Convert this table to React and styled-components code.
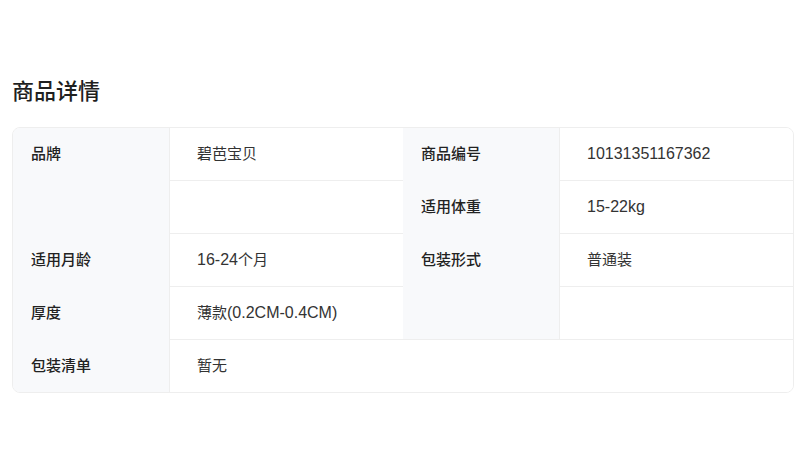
// 商品详情 규격표 - 라벨/값 두 쌍 + 마지막 전체 폭 행
import React from 'react';
import styled, { createGlobalStyle } from 'styled-components';

const GlobalStyle = createGlobalStyle`
  html, body {
    margin: 0;
    padding: 0;
    background: #fff;
  }
  body {
    font-family: 'Noto Sans CJK SC', 'Noto Sans', sans-serif;
    color: #222;
  }
`;

// col: 1 = 왼쪽, 3 = 오른쪽 / row, span: 그리드 위치
const labels = [
  { text: '品牌', col: 1, row: 1, span: 2 },
  { text: '适用月龄', col: 1, row: 3, span: 1 },
  { text: '厚度', col: 1, row: 4, span: 1 },
  { text: '包装清单', col: 1, row: 5, span: 1 },
  { text: '商品编号', col: 3, row: 1, span: 1 },
  { text: '适用体重', col: 3, row: 2, span: 1 },
  { text: '包装形式', col: 3, row: 3, span: 2 },
];

const values = [
  { text: '碧芭宝贝', col: 2, row: 1 },
  { text: '', col: 2, row: 2 },
  { text: '16-24个月', col: 2, row: 3 },
  { text: '薄款(0.2CM-0.4CM)', col: 2, row: 4 },
  { text: '10131351167362', col: 4, row: 1 },
  { text: '15-22kg', col: 4, row: 2 },
  { text: '普通装', col: 4, row: 3 },
  { text: '', col: 4, row: 4 },
  { text: '暂无', col: 2, row: 5, wide: true },
];

// 한자 / 영문·숫자 구간을 나눠서 영문 쪽만 Arial 계열로
const splitRuns = (text) =>
  text
    .split(/([\u4e00-\u9fff]+)/)
    .filter(Boolean)
    .map((part, i) =>
      /[\u4e00-\u9fff]/.test(part) ? <span key={i}>{part}</span> : <Latin key={i}>{part}</Latin>
    );

const App = () => {
  return (
    <>
      <GlobalStyle />
      <Page>
        <Title>商品详情</Title>
        <Card>
          {labels.map((l) => (
            <Label key={l.text} $col={l.col} $row={l.row} $span={l.span}>
              {l.text}
            </Label>
          ))}
          {values.map((v) => (
            <Value key={`${v.col}-${v.row}`} $col={v.col} $row={v.row} $wide={v.wide}>
              {splitRuns(v.text)}
            </Value>
          ))}
        </Card>
      </Page>
    </>
  );
};

export default App;

// --- Styled Components ---

const Page = styled.div`
  padding: 72px 12px 0;
`;

const Title = styled.h2`
  margin: 0 0 21px;
  font-size: 22px;
  line-height: 34px;
  font-weight: 500;
  color: #1f1f1f;
`;

const Card = styled.div`
  display: grid;
  grid-template-columns: 157px 233px 157px 1fr;
  grid-template-rows: 52px repeat(4, 53px);
  border: 1px solid #eeeeee;
  border-radius: 8px;
  overflow: hidden;
`;

const Label = styled.div`
  grid-column: ${(p) => p.$col};
  grid-row: ${(p) => `${p.$row} / span ${p.$span}`};
  padding: ${(p) => (p.$row === 1 ? '0' : '1px')} 0 0 18px;
  background: #f8f9fb;
  border-right: 1px solid #eeeeee;
  font-size: 15px;
  font-weight: 500;
  line-height: 50px;
  color: #222;
`;

const Value = styled.div`
  grid-column: ${(p) => (p.$wide ? `${p.$col} / span 3` : p.$col)};
  grid-row: ${(p) => p.$row};
  padding: 0 0 0 27px;
  border-top: ${(p) => (p.$row === 1 ? 'none' : '1px solid #eeeeee')};
  font-size: 15px;
  line-height: 50px;
  white-space: nowrap;
  color: #333;
  background: #fff;
`;

const Latin = styled.span`
  font-family: 'Liberation Sans', Arial, sans-serif;
  font-size: 16px;
`;
